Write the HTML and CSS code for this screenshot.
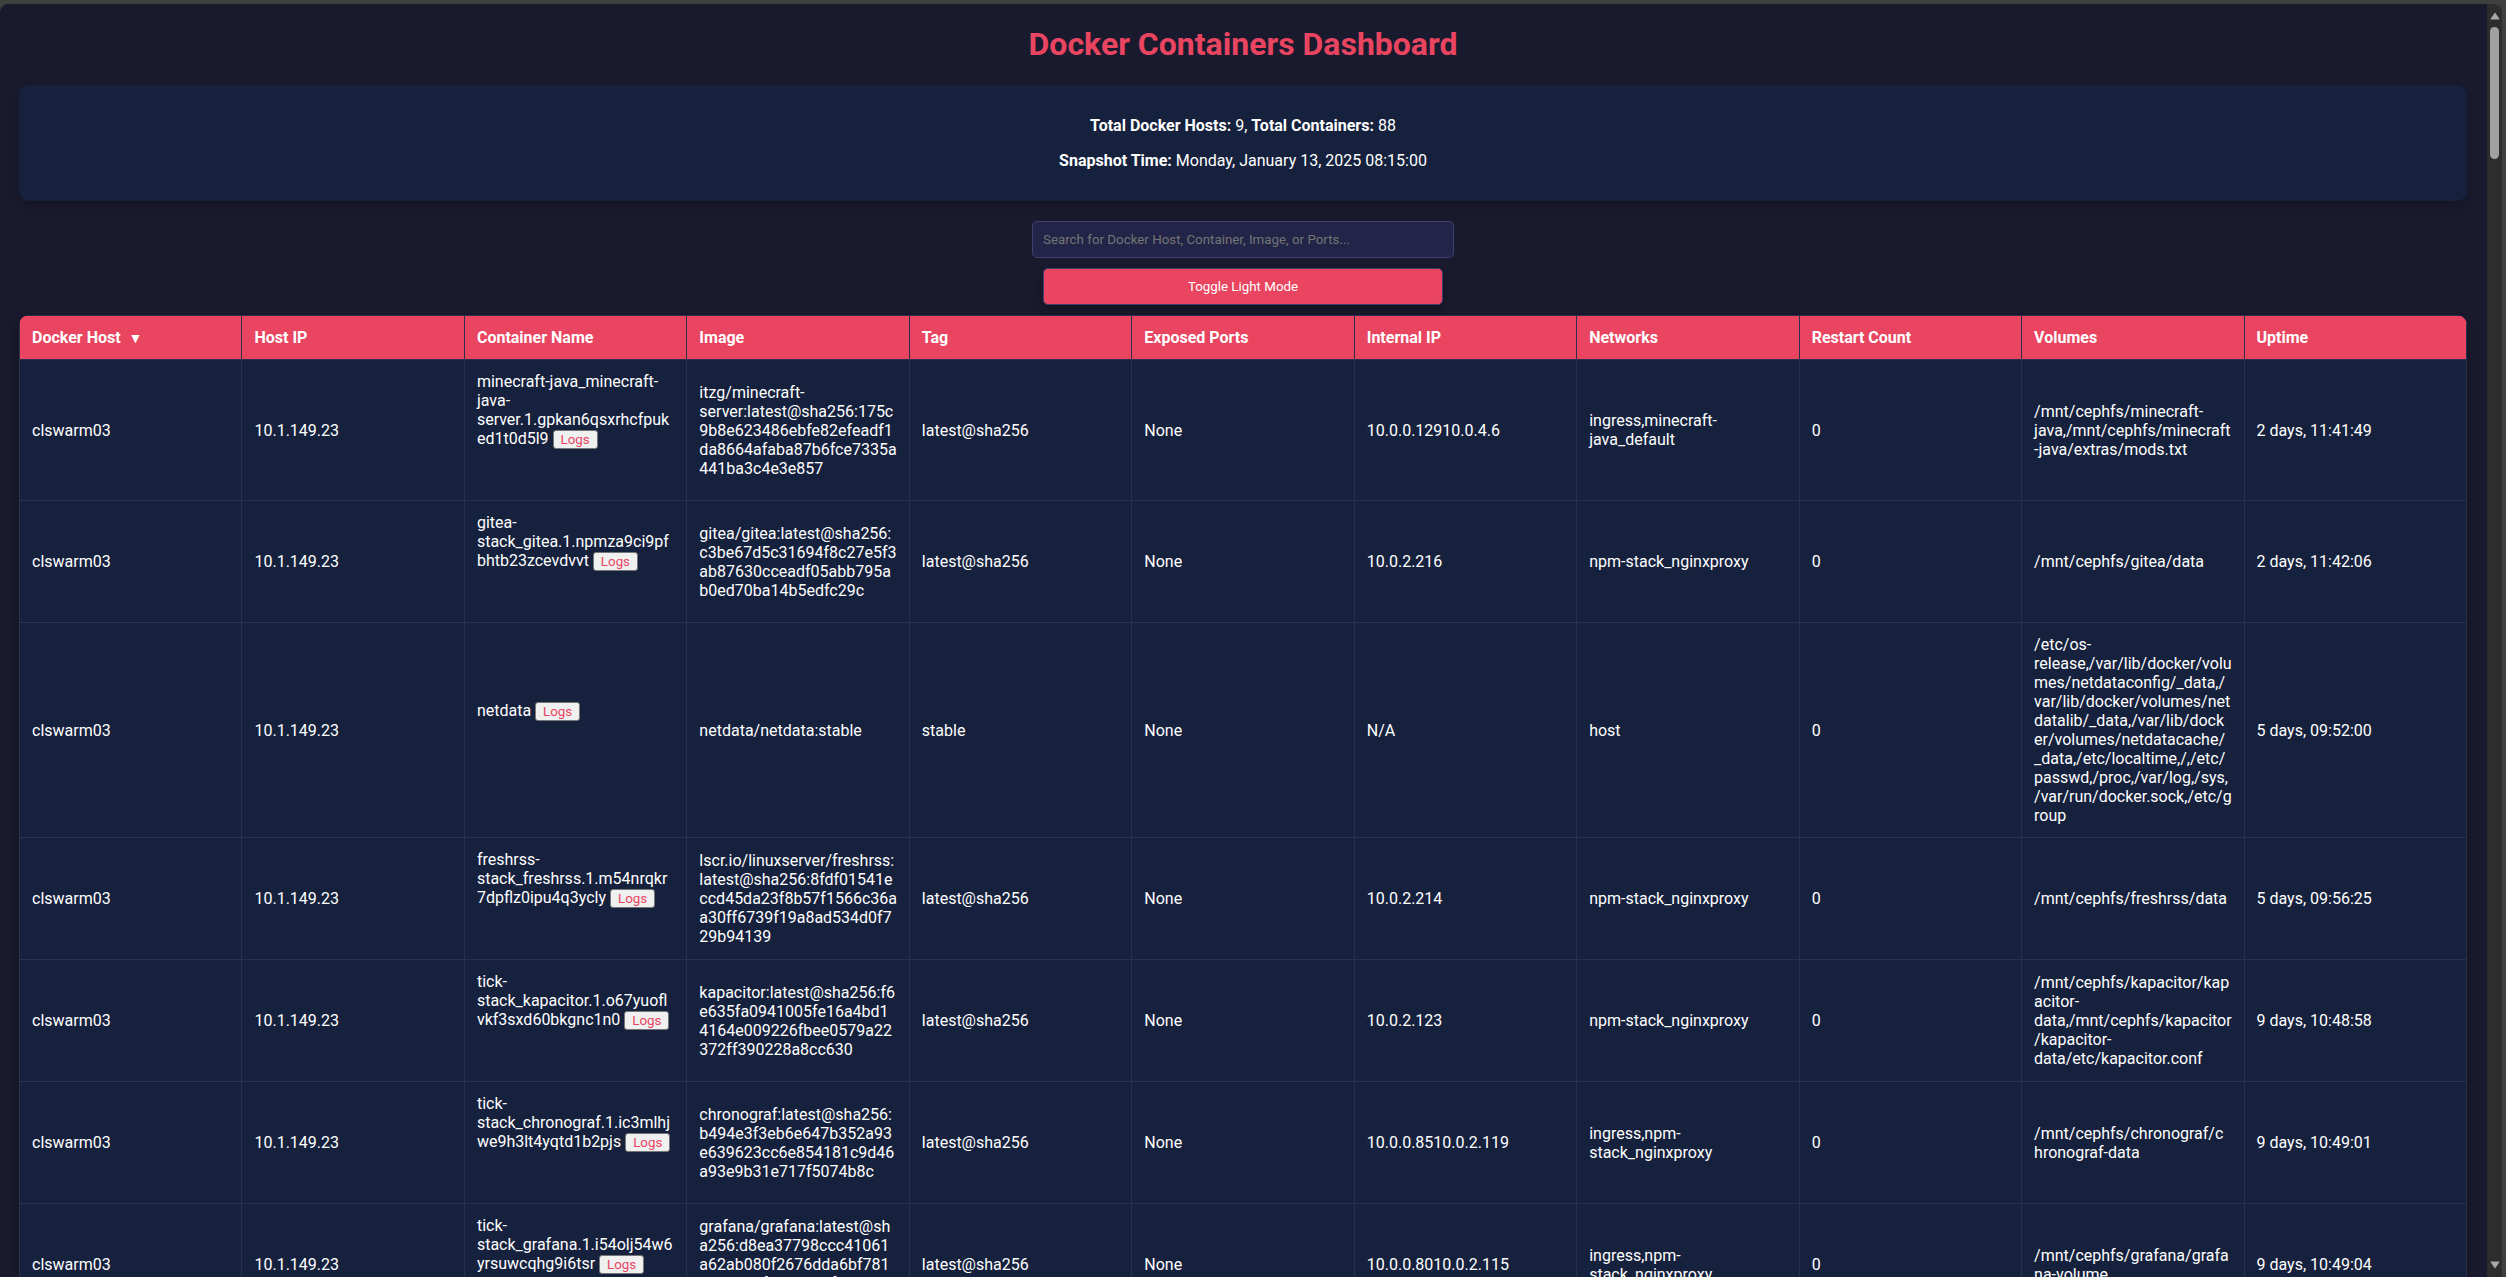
FILE: index.html
```html
<!DOCTYPE html>
<html lang="en">
<head>
    <meta charset="UTF-8">
    <meta name="viewport" content="width=device-width, initial-scale=1.0">
    <title>Docker Containers Dashboard</title>
    <link rel="stylesheet" href="styles.css">
</head>
<body>
    <div class="window">
        <main class="page">
            <h1>Docker Containers Dashboard</h1>

            <div class="summary">
                <p><strong>Total Docker Hosts:</strong> 9, <strong>Total Containers:</strong> 88</p>
                <p><strong>Snapshot Time:</strong> Monday, January 13, 2025 08:15:00</p>
            </div>

            <div class="controls">
                <input type="text" id="searchInput" class="search" aria-label="Search containers" placeholder="Search for Docker Host, Container, Image, or Ports...">
                <button type="button" id="themeToggle" class="toggle">Toggle Light Mode</button>
            </div>

            <table class="containers">
                <thead>
                    <tr>
                        <th>Docker Host <span class="sort">▼</span></th>
                        <th>Host IP</th>
                        <th>Container Name</th>
                        <th>Image</th>
                        <th>Tag</th>
                        <th>Exposed Ports</th>
                        <th>Internal IP</th>
                        <th>Networks</th>
                        <th>Restart Count</th>
                        <th>Volumes</th>
                        <th>Uptime</th>
                    </tr>
                </thead>
                <tbody>
                    <tr>
                        <td>clswarm03</td>
                        <td>10.1.149.23</td>
                        <td class="name">minecraft-java_minecraft-java-server.1.gpkan6qsxrhcfpuked1t0d5l9 <button type="button" class="logs">Logs</button></td>
                        <td>itzg/minecraft-server:latest@sha256:175c9b8e623486ebfe82efeadf1da8664afaba87b6fce7335a441ba3c4e3e857</td>
                        <td>latest@sha256</td>
                        <td>None</td>
                        <td>10.0.0.12910.0.4.6</td>
                        <td>ingress,minecraft-java_default</td>
                        <td>0</td>
                        <td>/mnt/cephfs/minecraft-java,/mnt/cephfs/minecraft-java/extras/mods.txt</td>
                        <td>2 days, 11:41:49</td>
                    </tr>
                    <tr>
                        <td>clswarm03</td>
                        <td>10.1.149.23</td>
                        <td class="name">gitea-stack_gitea.1.npmza9ci9pfbhtb23zcevdvvt <button type="button" class="logs">Logs</button></td>
                        <td>gitea/gitea:latest@sha256:c3be67d5c31694f8c27e5f3ab87630cceadf05abb795ab0ed70ba14b5edfc29c</td>
                        <td>latest@sha256</td>
                        <td>None</td>
                        <td>10.0.2.216</td>
                        <td>npm-stack_nginxproxy</td>
                        <td>0</td>
                        <td>/mnt/cephfs/gitea/data</td>
                        <td>2 days, 11:42:06</td>
                    </tr>
                    <tr>
                        <td>clswarm03</td>
                        <td>10.1.149.23</td>
                        <td class="name">netdata <button type="button" class="logs">Logs</button></td>
                        <td>netdata/netdata:stable</td>
                        <td>stable</td>
                        <td>None</td>
                        <td>N/A</td>
                        <td>host</td>
                        <td>0</td>
                        <td>/etc/os-release,/var/lib/docker/volu<wbr>mes/netdataconfig/_data,/<wbr>var/lib/docker/volumes/net<wbr>datalib/_data,/var/lib/dock<wbr>er/volumes/netdatacache/<wbr>_data,/etc/localtime,/,/etc/<wbr>passwd,/proc,/var/log,/sys,<wbr>/var/run/docker.sock,/etc/g<wbr>roup</td>
                        <td>5 days, 09:52:00</td>
                    </tr>
                    <tr>
                        <td>clswarm03</td>
                        <td>10.1.149.23</td>
                        <td class="name">freshrss-stack_freshrss.1.m54nrqkr7dpflz0ipu4q3ycly <button type="button" class="logs">Logs</button></td>
                        <td>lscr.io/linuxserver/freshrss:latest@sha256:8fdf01541eccd45da23f8b57f1566c36aa30ff6739f19a8ad534d0f729b94139</td>
                        <td>latest@sha256</td>
                        <td>None</td>
                        <td>10.0.2.214</td>
                        <td>npm-stack_nginxproxy</td>
                        <td>0</td>
                        <td>/mnt/cephfs/freshrss/data</td>
                        <td>5 days, 09:56:25</td>
                    </tr>
                    <tr>
                        <td>clswarm03</td>
                        <td>10.1.149.23</td>
                        <td class="name">tick-stack_kapacitor.1.o67yuofl<wbr>vkf3sxd60bkgnc1n0 <button type="button" class="logs">Logs</button></td>
                        <td>kapacitor:latest@sha256:f6<wbr>e635fa0941005fe16a4bd1<wbr>4164e009226fbee0579a22<wbr>372ff390228a8cc630</td>
                        <td>latest@sha256</td>
                        <td>None</td>
                        <td>10.0.2.123</td>
                        <td>npm-stack_nginxproxy</td>
                        <td>0</td>
                        <td>/mnt/cephfs/kapacitor/kapacitor-data,/mnt/cephfs/kapacitor/kapacitor-data/etc/kapacitor.conf</td>
                        <td>9 days, 10:48:58</td>
                    </tr>
                    <tr>
                        <td>clswarm03</td>
                        <td>10.1.149.23</td>
                        <td class="name">tick-stack_chronograf.1.ic3mlhjwe9h3lt4yqtd1b2pjs <button type="button" class="logs">Logs</button></td>
                        <td>chronograf:latest@sha256:b494e3f3eb6e647b352a93e639623cc6e854181c9d46a93e9b31e717f5074b8c</td>
                        <td>latest@sha256</td>
                        <td>None</td>
                        <td>10.0.0.8510.0.2.119</td>
                        <td>ingress,npm-stack_nginxproxy</td>
                        <td>0</td>
                        <td>/mnt/cephfs/chronograf/c<wbr>hronograf-data</td>
                        <td>9 days, 10:49:01</td>
                    </tr>
                    <tr>
                        <td>clswarm03</td>
                        <td>10.1.149.23</td>
                        <td class="name">tick-stack_grafana.1.i54olj54w6yrsuwcqhg9i6tsr <button type="button" class="logs">Logs</button></td>
                        <td>grafana/grafana:latest@sh<wbr>a256:d8ea37798ccc41061<wbr>a62ab080f2676dda6bf781<wbr>5558499f901bdb0f533a<wbr>456fb</td>
                        <td>latest@sha256</td>
                        <td>None</td>
                        <td>10.0.0.8010.0.2.115</td>
                        <td>ingress,npm-stack_nginxproxy</td>
                        <td>0</td>
                        <td>/mnt/cephfs/grafana/grafana-volume</td>
                        <td>9 days, 10:49:04</td>
                    </tr>
                </tbody>
            </table>
        </main>

        <div class="scrollbar" aria-hidden="true">
            <svg class="arrow" viewBox="0 0 10 8"><path d="M5 0.5 L9.5 7 Q9.5 7.5 9 7.5 H1 Q0.5 7.5 0.5 7 Z"/></svg>
            <div class="thumb"></div>
            <svg class="arrow arrow-down" viewBox="0 0 10 8"><path d="M5 7.5 L9.5 1 Q9.5 0.5 9 0.5 H1 Q0.5 0.5 0.5 1 Z"/></svg>
        </div>
    </div>

    <script>
        const searchInput = document.getElementById('searchInput');

        searchInput.addEventListener('input', function () {
            const keyword = this.value.toLowerCase();
            document.querySelectorAll('.containers tbody tr').forEach(row => {
                row.hidden = !row.textContent.toLowerCase().includes(keyword);
            });
        });

        document.getElementById('themeToggle').addEventListener('click', function () {
            const light = document.body.classList.toggle('light');
            this.textContent = light ? 'Toggle Dark Mode' : 'Toggle Light Mode';
        });
    </script>
</body>
</html>
```
FILE: styles.css
```css
body {
    margin: 0;
    font-family: Roboto, Arial, sans-serif;
    font-size: 16px;
    background-color: #3e403e;
    color: #fff;
}

.window {
    display: flex;
    box-sizing: border-box;
    height: 100vh;
    padding-top: 4px;
    padding-right: 4px;
}

.page {
    flex: 1;
    min-width: 0;
    padding: 0 20px 0 19px;
    background-color: #1a1a2e;
    border-top-left-radius: 8px;
    overflow-y: auto;
    scrollbar-width: none;
}

h1 {
    margin: 21px 0 22px;
    font-size: 32px;
    text-align: center;
    color: #e94560;
}

.summary {
    padding: 15px;
    margin-bottom: 20px;
    background-color: #16213e;
    border-radius: 10px;
    text-align: center;
    box-shadow: 0 4px 8px rgba(0, 0, 0, 0.2);
}

.summary p {
    margin: 16px 0;
}

.controls {
    display: flex;
    flex-direction: column;
    align-items: center;
    gap: 10px;
    margin-bottom: 10px;
}

.search {
    width: 400px;
    padding: 10px;
    font-family: inherit;
    color: #fff;
    background-color: #222448;
    border: 1px solid #3f4070;
    border-radius: 5px;
}

.search::placeholder {
    color: #757575;
}

.toggle {
    width: 400px;
    padding: 10px;
    font-family: inherit;
    color: #fff;
    background-color: #e94560;
    border: 1px solid #3f4070;
    border-radius: 5px;
    box-shadow: 0 4px 6px rgba(0, 0, 0, 0.3);
    cursor: pointer;
}

.containers {
    width: 100%;
    table-layout: fixed;
    border-collapse: collapse;
    background-color: #16213e;
    border-radius: 10px;
    overflow: hidden;
    box-shadow: 0 4px 8px rgba(0, 0, 0, 0.3);
}

.containers th,
.containers td {
    padding: 12px 11px 12px 12px;
    text-align: left;
    border: 1px solid #293050;
    overflow-wrap: break-word;
}

.containers th {
    background-color: #e94560;
    cursor: pointer;
}

.sort {
    margin-left: 4px;
    font-size: 14px;
    line-height: 1;
}

.containers .name {
    padding-bottom: 51px;
}

.logs {
    padding: 1px 7px;
    font-family: inherit;
    color: #e94560;
    background-color: #f0f0f0;
    border: 1px solid #767676;
    border-radius: 3px;
    cursor: pointer;
}

.scrollbar {
    display: flex;
    flex-direction: column;
    align-items: center;
    width: 15px;
    background-color: #2d2d2d;
    border-top-right-radius: 8px;
}

.arrow {
    width: 10px;
    height: 8px;
    margin: 8px 0 7px;
    fill: #a8aaa8;
}

.arrow-down {
    margin: auto 0 8px;
}

.thumb {
    width: 9px;
    height: 132px;
    background-color: #9fa19f;
    border-radius: 5px;
}

body.light .page {
    background-color: #f4f4f4;
}

body.light .summary,
body.light .containers {
    background-color: #fff;
    color: #333;
}
```
